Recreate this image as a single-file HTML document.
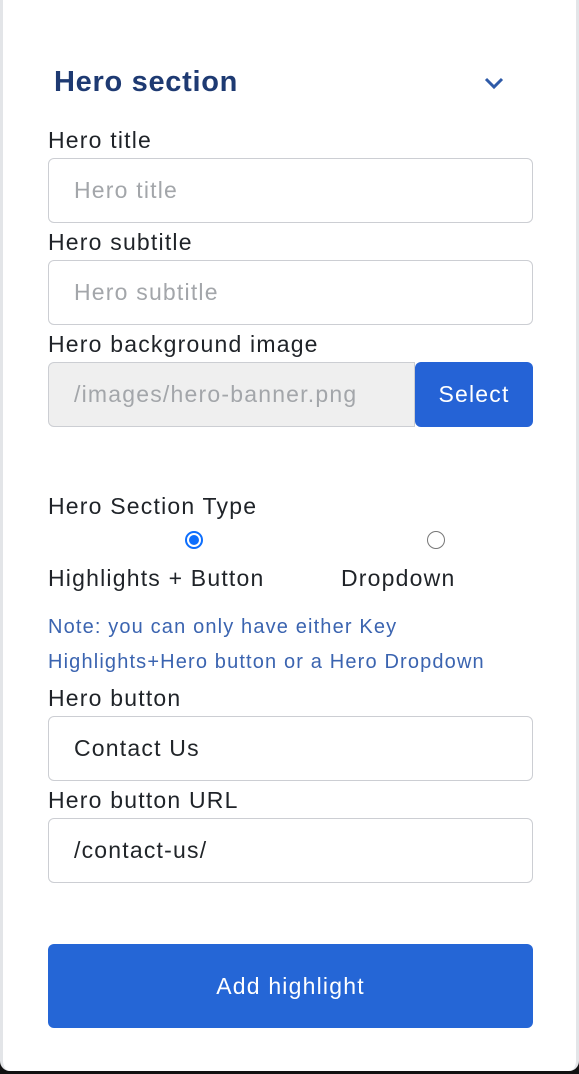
<!DOCTYPE html><html><head><style>
*{margin:0;padding:0;box-sizing:border-box}
body{width:579px;height:1074px;background:#111;position:relative;overflow:hidden;font-family:"Liberation Sans",sans-serif}
.card{position:absolute;left:0;top:0;width:579px;height:1071px;background:#fff;border-left:3px solid #e3e5e8;border-right:3px solid #e3e5e8;border-radius:0 0 10px 10px}
.a{position:absolute}
.lbl{position:absolute;left:48px;font-size:23px;letter-spacing:1.2px;color:#1f2328;line-height:26px;white-space:nowrap}
.in{position:absolute;left:48px;width:485px;height:65px;border:1px solid #ccced3;border-radius:6px;font-size:23px;letter-spacing:1.2px;padding-left:25px;line-height:63px;color:#212529}
.ph{color:#a3a6aa}
</style></head><body><div class="card"></div>
<div class="a" style="left:54px;top:66px;font-size:29px;letter-spacing:0.7px;font-weight:bold;color:#1e3a72">Hero section</div>
<svg class="a" style="left:483px;top:75px" width="22" height="16"><path d="M3 4 L11 12 L19 4" fill="none" stroke="#2e5aa8" stroke-width="3"/></svg>
<div class="lbl" style="top:127px">Hero title</div>
<div class="in ph" style="top:158px">Hero title</div>
<div class="lbl" style="top:229px">Hero subtitle</div>
<div class="in ph" style="top:260px">Hero subtitle</div>
<div class="lbl" style="top:331px">Hero background image</div>
<div class="in ph" style="top:362px;width:367px;background:#efefef;border-radius:6px 0 0 6px">/images/hero-banner.png</div>
<div class="a" style="left:415px;top:362px;width:118px;height:65px;background:#2563d6;border-radius:6px;color:#fff;font-size:23px;letter-spacing:1.2px;text-align:center;line-height:65px">Select</div>
<div class="lbl" style="top:493px">Hero Section Type</div>
<div class="a" style="left:185px;top:531px;width:18px;height:18px;border-radius:50%;border:2px solid #0d6efd;background:#fff"><div style="margin:2px;width:10px;height:10px;border-radius:50%;background:#0d6efd"></div></div>
<div class="a" style="left:427px;top:531px;width:18px;height:18px;border-radius:50%;border:1.5px solid #777"></div>
<div class="lbl" style="top:565px">Highlights + Button</div>
<div class="lbl" style="top:565px;left:341px">Dropdown</div>
<div class="a" style="left:48px;top:610px;font-size:20px;letter-spacing:1.15px;color:#3b64b0;line-height:35px;white-space:nowrap">Note: you can only have either Key<br>Highlights+Hero button or a Hero Dropdown</div>
<div class="lbl" style="top:685px">Hero button</div>
<div class="in" style="top:716px">Contact Us</div>
<div class="lbl" style="top:787px">Hero button URL</div>
<div class="in" style="top:818px">/contact-us/</div>
<div class="a" style="left:48px;top:944px;width:485px;height:84px;background:#2566d6;border-radius:6px;color:#fff;font-size:23px;letter-spacing:1.2px;text-align:center;line-height:84px">Add highlight</div>
</body></html>
